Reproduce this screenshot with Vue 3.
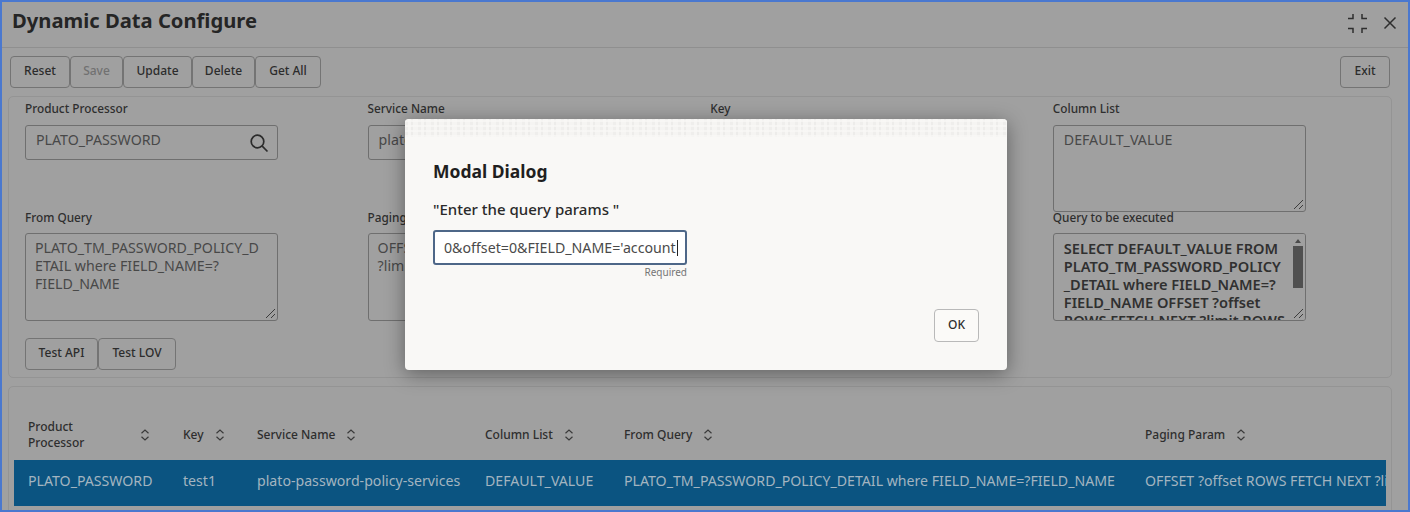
<script setup>
const fieldsTop = [
  { label: 'Product Processor', value: 'PLATO_PASSWORD', search: true },
  { label: 'Service Name', value: 'plato-password-policy-services' },
  { label: 'Key', value: 'test1' },
]
const columns = [
  { label: 'Product Processor', width: 155 },
  { label: 'Key', width: 74 },
  { label: 'Service Name', width: 228 },
  { label: 'Column List', width: 139 },
  { label: 'From Query', width: 521 },
  { label: 'Paging Param', width: 255 },
]
const row = [
  'PLATO_PASSWORD',
  'test1',
  'plato-password-policy-services',
  'DEFAULT_VALUE',
  'PLATO_TM_PASSWORD_POLICY_DETAIL where FIELD_NAME=?FIELD_NAME',
  'OFFSET ?offset ROWS FETCH NEXT ?limit ROWS ONLY',
]
</script>

<template>
  <div class="frame">
    <header class="titleBar">
      <h1 class="title">Dynamic Data Configure</h1>
      <div class="winIcons">
        <svg width="19" height="19" viewBox="0 0 19 19" fill="none" stroke="#2e2e2e" stroke-width="1.5">
          <path d="M0 4.500h5V0M19 4.500h-5V0M0 14.500h5V19M19 14.500h-5V19" />
        </svg>
        <svg width="14" height="14" viewBox="0 0 14 14" fill="none" stroke="#2e2e2e" stroke-width="1.5">
          <path d="M1.500 1.500l11 11M12.500 1.500l-11 11" />
        </svg>
      </div>
    </header>

    <div class="toolbar">
      <div class="btnGroup">
        <button class="btn w60">Reset</button>
        <button class="btn w53 disabled">Save</button>
        <button class="btn w69">Update</button>
        <button class="btn w63">Delete</button>
        <button class="btn w66">Get All</button>
      </div>
      <button class="btn exit">Exit</button>
    </div>

    <section class="panel formPanel">
      <div class="grid">
        <div v-for="f in fieldsTop" :key="f.label" class="field">
          <label class="label">{{ f.label }}</label>
          <div class="input">
            <span class="inputText">{{ f.value }}</span>
            <svg v-if="f.search" class="search" width="20" height="20" viewBox="0 0 20 20" fill="none" stroke="#2b2b2b" stroke-width="1.7">
              <circle cx="8.500" cy="8.500" r="6.300" />
              <path d="M13.200 13.200l5.300 5.300" />
            </svg>
          </div>
        </div>
        <div class="field">
          <label class="label">Column List</label>
          <div class="area colList">
            DEFAULT_VALUE
            <svg class="grip" width="11" height="11" viewBox="0 0 11 11" stroke="#3c3c3c" fill="none"><path d="M1 10L10 1M6 10l4-4" /></svg>
          </div>
        </div>

        <div class="field second">
          <label class="label">From Query</label>
          <div class="area">
            PLATO_TM_PASSWORD_POLICY_D<br />ETAIL where FIELD_NAME=?<br />FIELD_NAME
            <svg class="grip" width="11" height="11" viewBox="0 0 11 11" stroke="#3c3c3c" fill="none"><path d="M1 10L10 1M6 10l4-4" /></svg>
          </div>
        </div>
        <div class="field second">
          <label class="label">Paging Param</label>
          <div class="area">OFFSET ?offset ROWS FETCH NEXT<br />?limit ROWS ONLY</div>
        </div>
        <div class="field second"></div>
        <div class="field second">
          <label class="label tight">Query to be executed</label>
          <div class="area query">
            SELECT DEFAULT_VALUE FROM<br />PLATO_TM_PASSWORD_POLICY<br />_DETAIL where FIELD_NAME=?<br />FIELD_NAME OFFSET ?offset<br />ROWS FETCH NEXT ?limit ROWS
            <div class="scroll">
              <span class="arrow"></span>
              <span class="thumb"></span>
            </div>
            <svg class="grip" width="11" height="11" viewBox="0 0 11 11" stroke="#3c3c3c" fill="none"><path d="M1 10L10 1M6 10l4-4" /></svg>
          </div>
        </div>
      </div>
      <div class="btnGroup testBtns">
        <button class="btn w73">Test API</button>
        <button class="btn w78">Test LOV</button>
      </div>
    </section>

    <section class="panel tablePanel">
      <table class="table">
        <thead>
          <tr>
            <th v-for="c in columns" :key="c.label" :style="{ width: c.width + 'px' }">
              <div class="thInner" :class="{ wide: c.label === 'Product Processor' }">
                <span class="thLabel">{{ c.label }}</span>
                <svg width="10" height="12" viewBox="0 0 10 12" fill="none" stroke="#3a3a3a" stroke-width="1.200">
                  <path d="M1.500 4.200L5 1l3.500 3.200M1.500 7.800L5 11l3.500-3.200" />
                </svg>
              </div>
            </th>
          </tr>
        </thead>
        <tbody>
          <tr class="selected">
            <td v-for="(cell, i) in row" :key="i">{{ cell }}</td>
          </tr>
        </tbody>
      </table>
    </section>

    <div class="modal">
      <div class="modalTexture"></div>
      <div class="modalBody">
        <h2 class="modalTitle">Modal Dialog</h2>
        <label class="modalLabel">"Enter the query params "</label>
        <div class="modalInput">0&amp;offset=0&amp;FIELD_NAME='account<span class="caret"></span></div>
        <div class="required">Required</div>
      </div>
      <div class="modalFooter">
        <button class="btn okBtn">OK</button>
      </div>
    </div>
  </div>
</template>

<style>
html, body {
  margin: 0;
  background: #fff;
}
</style>

<style scoped>
  .frame {
    position: relative;
    box-sizing: border-box;
    width: 1410px;
    height: 512px;
    overflow: hidden;
    border: 2px solid #4a78cf;
    background: #a0a0a0;
    font-family: "Noto Sans", "Open Sans", sans-serif;
    color: #2e2e2e;
  }

  .titleBar {
    display: flex;
    justify-content: space-between;
    align-items: center;
    height: 45px;
    padding: 0 11px 0 10px;
    border-bottom: 1px solid #8f8f8f;
  }

  .title {
    margin: 0 0 9px;
    font-size: 20.200px;
    font-weight: 700;
    color: #252525;
  }

  .winIcons {
    display: flex;
    align-items: center;
    gap: 16px;
    margin-top: -3px;
  }

  .toolbar {
    display: flex;
    justify-content: space-between;
    padding: 8px 18px 0 8px;
  }

  .btnGroup {
    display: flex;
  }

  .btn {
    box-sizing: border-box;
    height: 32px;
    padding: 0 0 3px;
    border: 1px solid #747474;
    border-radius: 4px;
    background: transparent;
    font-family: inherit;
    font-size: 12px;
    font-weight: 500;
    color: #2c2c2c;
  }

  .w60 { width: 60px; }
  .w53 { width: 53px; }
  .w69 { width: 69px; }
  .w63 { width: 63px; }
  .w66 { width: 66px; }
  .w73 { width: 73px; }
  .w78 { width: 78px; }

  .disabled {
    color: #717171;
  }

  .exit {
    width: 50px;
  }

  .panel {
    box-sizing: border-box;
    margin-left: 6px;
    width: 1384px;
    border: 1px solid #949494;
    border-radius: 5px;
  }

  .formPanel {
    height: 282px;
    margin-top: 8px;
    padding: 3px 0 0 16px;
  }

  .grid {
    display: grid;
    grid-template-columns: repeat(4, 342.6px);
    grid-template-rows: 109px 138px;
  }

  .label {
    display: block;
    height: 16px;
    margin-bottom: 9px;
    font-size: 11.800px;
    line-height: 16px;
    font-weight: 500;
    color: #2e2e2e;
  }

  .second .label {
    margin-bottom: 8px;
  }

  .input,
  .area {
    position: relative;
    box-sizing: border-box;
    width: 253px;
    border: 1px solid #6f6f6f;
    border-radius: 3px;
    font-size: 14.200px;
    color: #484848;
  }

  .input {
    display: flex;
    align-items: center;
    justify-content: space-between;
    height: 35px;
    padding: 0 8px 0 10px;
    white-space: nowrap;
    overflow: hidden;
  }

  .inputText {
    margin-bottom: 6px;
  }

  .search {
    flex: none;
  }

  .area {
    height: 88px;
    padding: 5px 8px 0 9px;
    line-height: 18px;
    overflow: hidden;
    white-space: nowrap;
  }

  .colList {
    height: 87px;
    padding-left: 10px;
  }

  .grip {
    position: absolute;
    right: 1px;
    bottom: 1px;
  }

  .query {
    padding: 5px 8px 0 10px;
    font-size: 14.600px;
    font-weight: 600;
    color: #303030;
  }

  .scroll {
    position: absolute;
    top: 0;
    right: 0;
    bottom: 0;
    display: flex;
    flex-direction: column;
    align-items: center;
    width: 13px;
    background: #a0a0a0;
  }

  .arrow {
    width: 0;
    height: 0;
    margin-top: 5px;
    border-left: 3px solid transparent;
    border-right: 3px solid transparent;
    border-bottom: 4px solid #4a4a4a;
  }

  .thumb {
    width: 10px;
    height: 42px;
    margin-top: 3px;
    background: #505050;
  }

  .testBtns {
    margin-top: -9px;
  }

  .tablePanel {
    height: 140px;
    margin-top: 8px;
    padding: 32px 0 0 5px;
  }

  .table {
    width: 1372px;
    table-layout: fixed;
    border-collapse: collapse;
  }

  .table th {
    box-sizing: border-box;
    height: 41px;
    padding: 0 0 9px 14px;
    text-align: left;
    font-size: 12px;
    line-height: 16px;
    font-weight: 500;
    color: #2e2e2e;
  }

  .thInner {
    display: flex;
    align-items: center;
    gap: 11px;
  }

  .wide {
    gap: 0;
    justify-content: space-between;
    padding-right: 19px;
  }

  .wide .thLabel {
    width: 70px;
  }

  .selected td {
    box-sizing: border-box;
    height: 46px;
    padding: 0 0 5px 14px;
    background: #0b5481;
    font-size: 14.150px;
    color: #a3b4c0;
    white-space: nowrap;
    overflow: hidden;
  }

  .modal {
    position: absolute;
    left: 403px;
    top: 117px;
    display: flex;
    flex-direction: column;
    width: 602px;
    height: 251px;
    border-radius: 4px;
    background: #f9f8f6;
    box-shadow: 0 4px 20px rgba(0, 0, 0, 0.4);
    overflow: hidden;
  }

  .modalTexture {
    height: 18px;
    background:
      repeating-linear-gradient(0deg, rgba(249, 248, 246, 0.7) 0 2px, rgba(249, 248, 246, 0) 2px 5px),
      repeating-linear-gradient(90deg, #efeeec 0 3px, #f6f5f3 3px 6px, #edecea 6px 8px, #f5f4f2 8px 13px);
  }

  .modalBody {
    padding: 22px 28px 0;
  }

  .modalTitle {
    margin: 0 0 16px;
    font-size: 17.500px;
    line-height: 24px;
    font-weight: 700;
    color: #1f1f1f;
  }

  .modalLabel {
    display: block;
    margin-bottom: 11px;
    font-size: 15px;
    line-height: 20px;
    font-weight: 500;
    color: #2a2a2a;
  }

  .modalInput {
    box-sizing: border-box;
    height: 35px;
    width: 254px;
    padding-left: 9px;
    border: 2px solid #4e6788;
    border-radius: 3px;
    background: #fff;
    font-size: 14.200px;
    line-height: 31px;
    color: #4a4a4a;
    white-space: nowrap;
    overflow: hidden;
  }

  .caret {
    display: inline-block;
    width: 1px;
    height: 16px;
    margin-left: 1px;
    vertical-align: -3px;
    background: #222;
  }

  .required {
    width: 254px;
    text-align: right;
    font-size: 10px;
    line-height: 14px;
    color: #757575;
  }

  .modalFooter {
    display: flex;
    justify-content: flex-end;
    margin-top: auto;
    padding: 0 28px 28px;
  }

  .okBtn {
    width: 45px;
    height: 33px;
    border-color: #b9b9b9;
    background: #fbfaf8;
    color: #2e2e2e;
  }
</style>
